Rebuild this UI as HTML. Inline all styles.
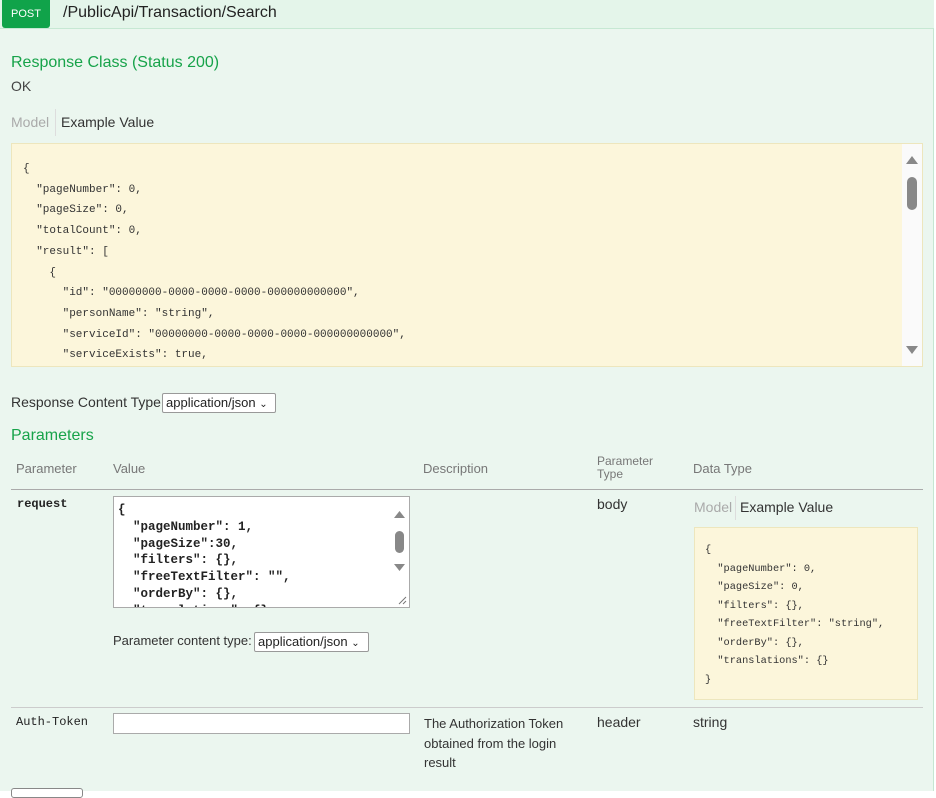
<!DOCTYPE html>
<html><head><meta charset="utf-8"><style>
*{box-sizing:border-box;margin:0;padding:0}
body{width:936px;height:791px;overflow:hidden;background:#fff;font-family:"Liberation Sans",sans-serif;color:#333;position:relative}
.abs{position:absolute}
.mono{font-family:"Liberation Mono",monospace}
.g{color:#17a34a}
</style></head><body>
<div class="abs" style="left:0;top:0;width:934px;height:791px;background:#ebf6ef;border-right:1px solid #c6e6d2"></div>
<div class="abs" style="left:0;top:0;width:934px;height:29px;background:#e4f5ea;border-bottom:1px solid #c6e8d3"></div>
<div class="abs" style="left:2px;top:0;width:48px;height:28px;background:#10a34a;border-radius:0 0 3px 3px;color:#fff;font-size:11px;line-height:28px;text-align:center">POST</div>
<div class="abs" style="left:63px;top:4px;font-size:16px;color:#222">/PublicApi/Transaction/Search</div>
<div class="abs g" style="left:11px;top:54px;font-size:16px">Response Class (Status 200)</div>
<div class="abs" style="left:11px;top:78px;font-size:14px;color:#444">OK</div>
<div class="abs" style="left:11px;top:114px;font-size:14px;color:#aaa">Model</div>
<div class="abs" style="left:55px;top:109px;width:1px;height:27px;background:#ddd"></div>
<div class="abs" style="left:61px;top:114px;font-size:14px;color:#333">Example Value</div>
<div class="abs" style="left:11px;top:143px;width:912px;height:224px;background:#fcf6db;border:1px solid #ede6bd"></div>
<div class="abs" style="left:902px;top:144px;width:20px;height:222px;background:#fafafa"></div>
<svg class="abs" style="left:902px;top:144px" width="20" height="222"><path d="M4 20 L10 12 L16 20Z" fill="#888"/><rect x="5" y="33" width="10" height="33" rx="5" fill="#888"/><path d="M4 202 L10 210 L16 202Z" fill="#888"/></svg>
<pre class="abs mono" style="left:23px;top:159px;font-size:11px;line-height:20.7px;color:#333">{
  "pageNumber": 0,
  "pageSize": 0,
  "totalCount": 0,
  "result": [
    {
      "id": "00000000-0000-0000-0000-000000000000",
      "personName": "string",
      "serviceId": "00000000-0000-0000-0000-000000000000",
      "serviceExists": true,</pre>
<div class="abs" style="left:11px;top:394px;font-size:14px;color:#333">Response Content Type</div>
<div class="abs" style="left:162px;top:393px;width:114px;height:20px;background:#fff;border:1px solid #999;border-radius:2px;font-size:13px;line-height:18px;padding-left:3px;color:#222">application/json <span style="font-size:10px">&#8964;</span></div>
<div class="abs g" style="left:11px;top:427px;font-size:16px">Parameters</div>
<div class="abs" style="left:16px;top:461px;font-size:13px;color:#777">Parameter</div>
<div class="abs" style="left:113px;top:461px;font-size:13px;color:#777">Value</div>
<div class="abs" style="left:423px;top:461px;font-size:13px;color:#777">Description</div>
<div class="abs" style="left:597px;top:455px;font-size:12px;line-height:13px;color:#777">Parameter<br>Type</div>
<div class="abs" style="left:693px;top:461px;font-size:13px;color:#777">Data Type</div>
<div class="abs" style="left:11px;top:489px;width:912px;height:1px;background:#aaa"></div>
<div class="abs mono" style="left:17px;top:497px;font-size:12px;font-weight:bold;color:#222">request</div>
<div class="abs" style="left:113px;top:496px;width:297px;height:112px;background:#fff;border:1px solid #aaa;overflow:hidden">
<pre class="mono" style="position:absolute;left:4px;top:5px;font-size:12.5px;line-height:16.8px;font-weight:bold;color:#222">{
  "pageNumber": 1,
  "pageSize":30,
  "filters": {},
  "freeTextFilter": "",
  "orderBy": {},
  "translations": {}</pre>
<div style="position:absolute;right:0;top:0;width:19px;height:110px;background:#fff"></div>
<svg style="position:absolute;right:0;top:0" width="19" height="110"><path d="M4 21 L9.5 14 L15 21Z" fill="#888"/><rect x="5" y="34" width="9" height="22" rx="4.5" fill="#888"/><path d="M4 67 L9.5 74 L15 67Z" fill="#888"/><path d="M9 107 L16 100 M13 107 L16 104" stroke="#777" stroke-width="1"/></svg>
</div>
<div class="abs" style="left:113px;top:633px;font-size:13px;color:#333">Parameter content type:</div>
<div class="abs" style="left:254px;top:632px;width:115px;height:20px;background:#fff;border:1px solid #999;border-radius:2px;font-size:13px;line-height:18px;padding-left:3px;color:#222">application/json <span style="font-size:10px">&#8964;</span></div>
<div class="abs" style="left:597px;top:496px;font-size:14px;color:#333">body</div>
<div class="abs" style="left:694px;top:499px;font-size:14px;color:#aaa">Model</div>
<div class="abs" style="left:735px;top:496px;width:1px;height:24px;background:#ddd"></div>
<div class="abs" style="left:740px;top:499px;font-size:14px;color:#333">Example Value</div>
<div class="abs" style="left:694px;top:527px;width:224px;height:173px;background:#fcf6db;border:1px solid #ede6bd"></div>
<pre class="abs mono" style="left:705px;top:541px;font-size:10.3px;line-height:18.5px;color:#333">{
  "pageNumber": 0,
  "pageSize": 0,
  "filters": {},
  "freeTextFilter": "string",
  "orderBy": {},
  "translations": {}
}</pre>
<div class="abs" style="left:11px;top:707px;width:912px;height:1px;background:#ccc"></div>
<div class="abs mono" style="left:16px;top:715px;font-size:12px;color:#222">Auth-Token</div>
<div class="abs" style="left:113px;top:713px;width:297px;height:21px;background:#fff;border:1px solid #aaa"></div>
<div class="abs" style="left:424px;top:714px;font-size:13px;line-height:19.5px;color:#333">The Authorization Token<br>obtained from the login<br>result</div>
<div class="abs" style="left:597px;top:714px;font-size:14px;color:#333">header</div>
<div class="abs" style="left:693px;top:714px;font-size:14px;color:#333">string</div>
<div class="abs" style="left:11px;top:788px;width:72px;height:10px;background:#fff;border:1px solid #888;border-radius:3px"></div>
</body></html>
